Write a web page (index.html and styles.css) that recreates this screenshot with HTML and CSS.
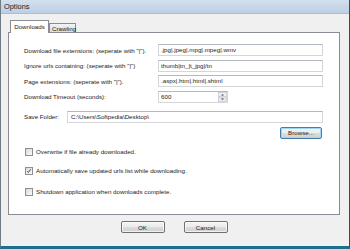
FILE: index.html
```html
<!DOCTYPE html>
<html lang="en">
<head>
  <meta charset="UTF-8" />
  <title>Options</title>
  <link rel="stylesheet" href="styles.css">
</head>
<body>

<div class="window">
  <div class="titlebar">Options</div>

  <div class="corpo">
    <!-- ABAS -->
    <div class="abas">
      <div class="aba ativa">Downloads</div>
      <div class="aba">Crawling</div>
    </div>

    <div class="painel">
      <div class="linha">
        <div class="rotulo">Download file extensions: (seperate with "|").</div>
        <div class="campo">.jpg|.jpeg|.mpg|.mpeg|.wmv</div>
      </div>
      <div class="linha">
        <div class="rotulo">Ignore urls containing: (seperate with "|")</div>
        <div class="campo">thumb|tn_|t_jpg|/tn</div>
      </div>
      <div class="linha">
        <div class="rotulo">Page extensions: (seperate with "|").</div>
        <div class="campo">.aspx|.htm|.html|.shtml</div>
      </div>

      <div class="linha timeout">
        <div class="rotulo">Download Timeout (seconds):</div>
        <div class="campo spin">
          <span>600</span>
          <svg class="setas" width="9" height="10" viewBox="0 0 9 10">
            <rect x="0.5" y="0.5" width="8" height="4.5" fill="#eef0f3" stroke="#b9bdc4" stroke-width="0.6"/>
            <rect x="0.5" y="5" width="8" height="4.5" fill="#e6e9ed" stroke="#b9bdc4" stroke-width="0.6"/>
            <path d="M3 3.6 L4.5 2 L6 3.6 Z" fill="#3d4a5c"/>
            <path d="M3 6.4 L4.5 8 L6 6.4 Z" fill="#3d4a5c"/>
          </svg>
        </div>
      </div>

      <div class="linha pasta">
        <div class="rotulo curto">Save Folder:</div>
        <div class="campo largo">C:\Users\Softpedia\Desktop\</div>
      </div>

      <div class="linha-botao">
        <button class="botao foco">Browse...</button>
      </div>

      <!-- OPÇÕES -->
      <div class="opcao primeira">
        <span class="caixa"></span>
        <span>Overwrite if file already downloaded.</span>
      </div>
      <div class="opcao segunda">
        <span class="caixa">
          <svg width="8" height="8" viewBox="0 0 8 8">
            <path d="M1.6 4.2 L3.2 5.9 L6.4 1.6" fill="none" stroke="#2a3f66" stroke-width="1.2"/>
          </svg>
        </span>
        <span>Automatically save updated urls list while downloading.</span>
      </div>
      <div class="opcao terceira">
        <span class="caixa"></span>
        <span>Shutdown application when downloads complete.</span>
      </div>
    </div>

    <div class="rodape">
      <button class="botao">OK</button>
      <button class="botao">Cancel</button>
    </div>
  </div>
</div>

</body>
</html>
```

FILE: styles.css
```css
*, *::before, *::after { box-sizing: border-box; margin: 0; padding: 0; }

:root {
  --fundo:   #f0f0f0;
  --texto:   #1b1b1b;
  --borda:   #898c95;
  --campo:   #b4b8bf;
}

body {
  font-family: "Liberation Sans", Arial, sans-serif;
  font-size: 6.2px;
  color: var(--texto);
  background: var(--fundo);
}

.window {
  width: 350px;
  height: 249px;
  display: flex;
  flex-direction: column;
  background: var(--fundo);
  border-left: 1px solid #6f7c88;
  border-right: 1px solid #2f5366;
  border-bottom: 3px solid #1f6e8c;
}

.titlebar {
  height: 14px;
  line-height: 13px;
  padding-left: 3px;
  font-size: 7.4px;
  color: #1a1a1a;
  background: linear-gradient(#d3e0ee, #bccfe4);
  border-bottom: 1px solid #a9bdd3;
}

.corpo {
  flex: 1;
  display: flex;
  flex-direction: column;
  padding: 6px 9px 0 7px;
}

/* ── ABAS ─────────────────────────────── */
.abas {
  display: flex;
  align-items: flex-end;
  height: 12px;
  padding-left: 2px;
  position: relative;
  z-index: 1;
}

.aba {
  height: 9px;
  line-height: 9px;
  padding: 0 2px;
  width: 27px;
  border: 1px solid var(--borda);
  border-bottom: none;
  background: linear-gradient(#f3f3f3, #dcdcdc);
  white-space: nowrap;
}

.aba.ativa {
  width: 39px;
  height: 13px;
  line-height: 11px;
  margin-bottom: -1px;
  background: #fff;
  text-align: center;
  padding: 0;
}

.painel {
  height: 183px;
  background: #fff;
  border: 1px solid var(--borda);
  padding: 11px 16px 0 15px;
}

/* ── LINHAS ──────────────────────────── */
.linha {
  display: flex;
  align-items: center;
  height: 12px;
  margin-bottom: 3.5px;
}

.rotulo { width: 134px; white-space: nowrap; }
.rotulo.curto { width: 43px; }

.campo {
  width: 165px;
  height: 12px;
  line-height: 10px;
  padding-left: 2px;
  border: 1px solid #d3d6db;
  border-top-color: var(--campo);
  background: #fff;
  white-space: nowrap;
}

.campo.largo { width: 256px; padding-left: 3px; }

.linha.timeout { margin-top: 2.5px; margin-bottom: 0; }
.linha.pasta   { margin-top: 8px; margin-bottom: 0; }

.campo.spin {
  width: 70px;
  display: flex;
  align-items: center;
  justify-content: space-between;
  padding-right: 0;
}

.setas { display: block; }

.linha-botao {
  display: flex;
  justify-content: flex-end;
  margin-top: 4px;
  padding-right: 1px;
}

/* ── BOTÕES ──────────────────────────── */
.botao {
  font-family: inherit;
  font-size: 6.2px;
  color: var(--texto);
  width: 44px;
  height: 12px;
  border: 1px solid #707070;
  border-radius: 2px;
  background: linear-gradient(#f4f4f4 0%, #ebebeb 48%, #dddddd 52%, #cfcfcf 100%);
  box-shadow: inset 0 0 0 1px rgba(255,255,255,0.7);
}

.botao.foco {
  width: 42px;
  border-color: #3c7fb1;
  box-shadow: inset 0 0 0 1px #9fd6f2;
}

/* ── OPÇÕES ──────────────────────────── */
.opcao {
  display: flex;
  align-items: center;
  gap: 3px;
  height: 8px;
  padding-left: 1px;
}

.opcao.primeira { margin-top: 9px; }
.opcao.segunda  { margin-top: 11px; }
.opcao.terceira { margin-top: 13px; }

.caixa {
  width: 8px;
  height: 8px;
  border: 1px solid #8e8f8f;
  background: linear-gradient(135deg, #d8d8d8, #fbfbfb);
  display: flex;
  align-items: center;
  justify-content: center;
}

.caixa svg { display: block; }

.rodape {
  display: flex;
  justify-content: center;
  gap: 19px;
  margin-top: 6px;
}
```
